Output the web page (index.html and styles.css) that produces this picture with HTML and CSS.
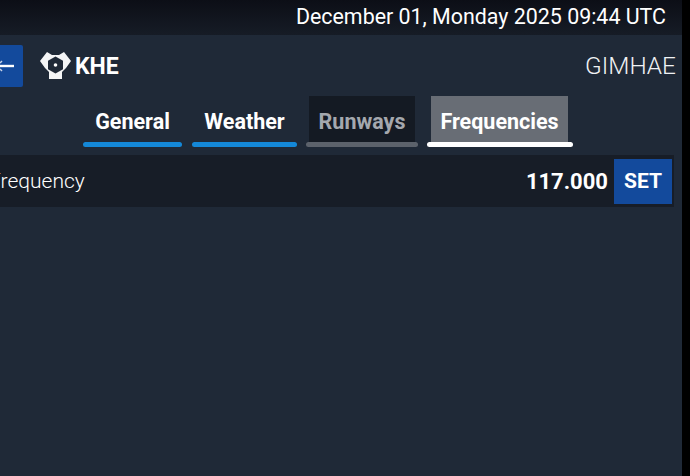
FILE: index.html
```html
<!DOCTYPE html>
<html lang="en">
<head>
<meta charset="utf-8">
<title>KHE Frequencies</title>
<link rel="stylesheet" href="styles.css">
</head>
<body>
<div class="screen">
  <header class="status"><span>December 01, Monday 2025 09:44 UTC</span></header>
  <div class="titlebar">
    <div class="brand">
      <button class="back"><svg width="23" height="42" viewBox="0 0 23 42"><path d="M0 21H14" stroke="#fff" stroke-width="2.4" fill="none"/><path d="M0 18L2 16M0 24L2 26" stroke="#c8d4e8" stroke-width="1.5" fill="none"/></svg></button>
      <svg class="logo" width="31" height="29" viewBox="0 0 31 29"><path fill="#f4f5f6" d="M0 10L7 1L12 4H19L24 1L31 10L26 17L22 21V28H9V21L5 17Z"/><path fill="#1f2937" d="M15.5 5.5L23 9.8V18.2L15.5 22.5L8 18.2V9.8Z"/><circle cx="15.5" cy="14" r="1.8" fill="#fff"/></svg>
      <span class="code">KHE</span>
    </div>
    <span class="city">GIMHAE</span>
  </div>
  <nav class="tabs">
    <div class="tab t-general"><span class="label">General</span><i class="bar blue"></i></div>
    <div class="tab t-weather"><span class="label">Weather</span><i class="bar blue"></i></div>
    <div class="tab t-runways"><span class="label dim">Runways</span><i class="bar grey"></i></div>
    <div class="tab t-freq"><span class="label active">Frequencies</span><i class="bar white"></i></div>
  </nav>
  <section class="row">
    <span class="name">Frequency</span>
    <div class="right"><span class="value">117.000</span><button class="set">SET</button></div>
  </section>
</div>
</body>
</html>
```
FILE: styles.css
```css
* { box-sizing: border-box; }
html, body { margin: 0; height: 100%; background: #000; }
body { overflow: hidden; font-family: Roboto, "Liberation Sans", sans-serif; color: #fff; }
.screen { width: 682px; height: 476px; display: flex; flex-direction: column; background: #1f2937; overflow: hidden; }
.status { height: 35px; flex: none; display: flex; justify-content: flex-end; align-items: center; padding: 0 16px 2px 0; font-size: 21.4px; background: linear-gradient(#0c0e16, #161c26); }
.titlebar { height: 61px; flex: none; display: flex; justify-content: space-between; align-items: center; padding: 0 6px 0 0; }
.brand { display: flex; align-items: center; }
.back { width: 23px; height: 42px; padding: 0; border: 0; background: #134a9c; display: flex; margin-right: 17px; border-radius: 0 2px 2px 0; }
.logo { margin-right: 4px; margin-top: -1px; }
.code { font-size: 23px; font-weight: 700; margin-top: 2px; }
.city { font-size: 24.4px; font-weight: 300; color: #f0f2f4; }
.tabs { display: flex; height: 52px; flex: none; padding-left: 83px; align-items: flex-start; }
.tab { display: flex; flex-direction: column; align-items: center; height: 52px; }
.label { font-size: 21.5px; font-weight: 700; height: 46px; line-height: 51px; text-align: center; display: block; }
.t-general { width: 99px; margin-right: 10px; }
.t-weather { width: 105px; margin-right: 9px; }
.t-runways { width: 112px; margin-right: 9px; }
.t-freq { width: 146px; }
.dim { background: #141a23; color: #a4a8ae; width: 106px; }
.active { background: #686d75; width: 137px; margin-left: -1px; }
.bar { display: block; width: 100%; height: 5px; border-radius: 3px; }
.blue { background: #1488d8; }
.grey { background: #5c626b; }
.white { background: #fff; }
.row { height: 52px; margin-top: 7px; margin-right: 8px; flex: none; background: #171d27; display: flex; justify-content: space-between; align-items: center; padding-right: 2px; }
.name { font-size: 21px; font-weight: 300; margin-left: -11px; margin-top: -1px; }
.right { display: flex; align-items: center; }
.value { font-size: 22px; font-weight: 700; margin-right: 6px; }
.set { width: 58px; height: 45px; border: 0; padding: 0; background: #134a9c; color: #fff; font: 700 21px Roboto, sans-serif; }
```
